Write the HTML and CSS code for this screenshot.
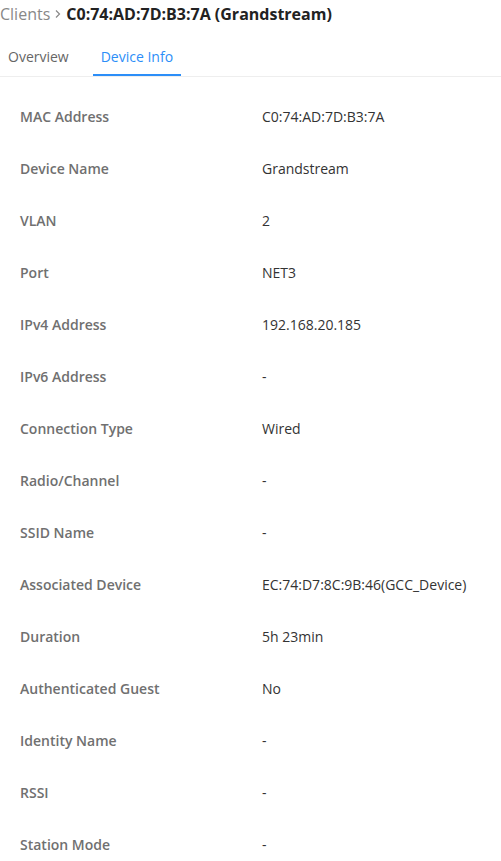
FILE: index.html
```html
<!DOCTYPE html>
<html lang="en">
<head>
    <meta charset="UTF-8">
    <meta name="viewport" content="width=device-width, initial-scale=1.0">
    <title>Device Info</title>
    <link rel="stylesheet" href="styles.css">
</head>
<body>

<!-- Breadcrumb -->
<div class="breadcrumb">
    <span class="crumb">Clients</span>
    <svg class="chevron" width="8" height="10" viewBox="0 0 8 10"><path d="M2 1.5 L5.5 5 L2 8.5" fill="none" stroke="#888" stroke-width="1.2"/></svg>
    <span class="current">C0:74:AD:7D:B3:7A (Grandstream)</span>
</div>

<!-- Tabs -->
<div class="tabs">
    <div class="tab">Overview</div>
    <div class="tab active">Device Info</div>
</div>

<!-- Info list -->
<div class="info-list">
    <div class="row"><span class="label">MAC Address</span><span class="value">C0:74:AD:7D:B3:7A</span></div>
    <div class="row"><span class="label">Device Name</span><span class="value">Grandstream</span></div>
    <div class="row"><span class="label">VLAN</span><span class="value">2</span></div>
    <div class="row"><span class="label">Port</span><span class="value">NET3</span></div>
    <div class="row"><span class="label">IPv4 Address</span><span class="value">192.168.20.185</span></div>
    <div class="row"><span class="label">IPv6 Address</span><span class="value">-</span></div>
    <div class="row"><span class="label">Connection Type</span><span class="value">Wired</span></div>
    <div class="row"><span class="label">Radio/Channel</span><span class="value">-</span></div>
    <div class="row"><span class="label">SSID Name</span><span class="value">-</span></div>
    <div class="row"><span class="label">Associated Device</span><span class="value">EC:74:D7:8C:9B:46(GCC_Device)</span></div>
    <div class="row"><span class="label">Duration</span><span class="value">5h 23min</span></div>
    <div class="row"><span class="label">Authenticated Guest</span><span class="value">No</span></div>
    <div class="row"><span class="label">Identity Name</span><span class="value">-</span></div>
    <div class="row"><span class="label">RSSI</span><span class="value">-</span></div>
    <div class="row"><span class="label">Station Mode</span><span class="value">-</span></div>
</div>

</body>
</html>
```

FILE: styles.css
```css
body {
    font-family: "Open Sans", sans-serif;
    margin: 0;
    padding: 0;
    background-color: white;
    color: #333;
}

.breadcrumb {
    display: flex;
    align-items: center;
    height: 28px;
    padding-left: 0;
}

.breadcrumb .crumb {
    font-size: 16px;
    color: #888;
}

.breadcrumb .chevron {
    margin: 0 4px 0 4px;
}

.breadcrumb .current {
    font-size: 16px;
    font-weight: 700;
    color: #222;
}

.tabs {
    display: flex;
    margin-top: 10px;
    border-bottom: 1px solid #eeeeee;
}

.tab {
    padding: 0 8px;
    height: 38px;
    line-height: 38px;
    font-size: 14px;
    color: #666;
    margin-right: 16px;
    box-sizing: border-box;
}

.tab.active {
    color: #2c8ef8;
    border-bottom: 2px solid #2c8ef8;
}

.info-list {
    padding: 13px 20px 0 20px;
}

.row {
    display: flex;
    height: 52px;
    align-items: center;
    font-size: 14px;
}

.row .label {
    width: 242px;
    font-weight: 600;
    color: #707070;
}

.row .value {
    color: #333;
}
```
